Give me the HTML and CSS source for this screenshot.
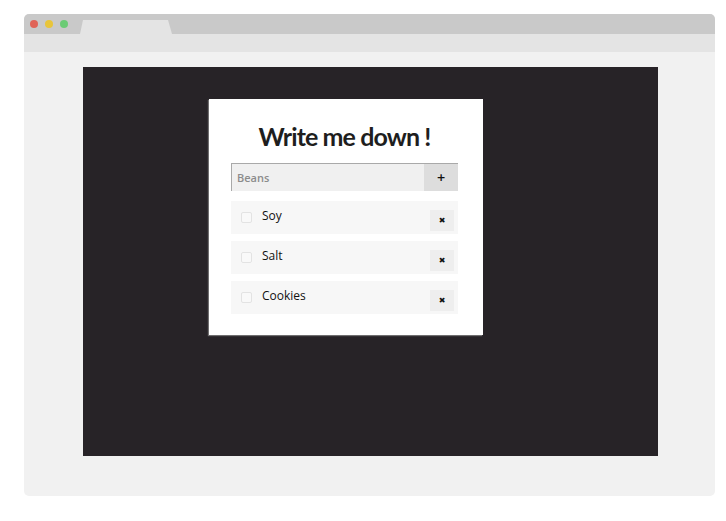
FILE: index.html
```html
<!DOCTYPE html>
<html>
<head>
<meta charset="utf-8">
<link rel="stylesheet" href="styles.css">
</head>
<body>
<div class="browser">
  <div class="titlebar">
    <div class="dots"><span class="dot red"></span><span class="dot yellow"></span><span class="dot green"></span></div>
    <div class="tab"></div>
  </div>
  <div class="toolbar"></div>
  <div class="content">
    <div class="stage">
      <div class="card">
        <h1 class="title">Write me down !</h1>
        <form class="add">
          <div class="field">Beans</div>
          <button type="button" class="add-btn">+</button>
        </form>
        <ul class="list">
          <li class="item"><span class="check"></span><span class="label">Soy</span><span class="del">✖</span></li>
          <li class="item"><span class="check"></span><span class="label">Salt</span><span class="del">✖</span></li>
          <li class="item"><span class="check"></span><span class="label">Cookies</span><span class="del">✖</span></li>
        </ul>
      </div>
    </div>
  </div>
</div>
</body>
</html>
```
FILE: styles.css
```css
html, body { margin: 0; padding: 0; background: #ffffff; }
body { padding: 14px 11px 0 24px; font-family: "Open Sans", sans-serif; }
.browser {
  width: 691px;
  height: 482px;
  border-radius: 5px;
  overflow: hidden;
  display: flex;
  flex-direction: column;
  background: #f1f1f1;
}
.titlebar {
  height: 20px;
  background: #c9c9c9;
  display: flex;
  align-items: flex-end;
  position: relative;
}
.dots { position: absolute; left: 6px; top: 6px; display: flex; gap: 7px; }
.dot { width: 8px; height: 8px; border-radius: 50%; display: block; }
.red { background: #e06458; }
.yellow { background: #e8c53a; }
.green { background: #6bcb75; }
.tab {
  margin-left: 56px;
  width: 92px;
  height: 14px;
  background: #e4e4e4;
  clip-path: polygon(3px 0, 88px 0, 92px 100%, 0 100%);
}
.toolbar { height: 18px; background: #e4e4e4; }
.content { flex: 1; padding: 15px 57px 0 59px; }
.stage {
  height: 389px;
  background: #272327;
  display: flex;
  justify-content: flex-start;
  align-items: flex-start;
  padding: 32px 0 0 126px;
  box-sizing: border-box;
}
.card {
  width: 274px;
  height: 236px;
  box-sizing: border-box;
  background: #ffffff;
  padding: 20px 25px 0 22px;
  box-shadow: -1px 1px 1px rgba(160,160,160,0.6);
}
.title {
  margin: 0;
  font-family: Lato, sans-serif;
  font-weight: 700;
  font-size: 25px;
  letter-spacing: -0.9px;
  color: #1e1e1e;
  text-align: center;
  line-height: 34px;
  height: 44px;
}
.add { display: flex; height: 28px; margin: 0 0 10px 0; }
.field {
  flex: 1;
  background: #f0f0f0;
  border-top: 1px solid #a9a9a9;
  border-left: 1px solid #a9a9a9;
  color: #8c8c8c;
  font-family: "Open Sans", sans-serif;
  font-weight: 600;
  font-size: 11px;
  line-height: 27px;
  padding-left: 5px;
}
.add-btn {
  width: 34px;
  border: none;
  border-top: 1px solid #a9a9a9;
  background: #dddddd;
  font-family: "DejaVu Sans", sans-serif;
  font-weight: 700;
  font-size: 11px;
  color: #111;
  padding: 0;
}
.list { list-style: none; margin: 0; padding: 0; display: flex; flex-direction: column; gap: 7px; }
.item {
  height: 33px;
  background: #f7f7f7;
  display: flex;
  align-items: center;
  padding: 0 4px 0 10px;
}
.check {
  width: 9px;
  height: 9px;
  border: 1px solid #e3e3e3;
  border-radius: 2px;
  background: #f9f9f9;
}
.label {
  flex: 1;
  margin-left: 10px;
  font-size: 12px;
  color: #111;
  position: relative;
  top: -2px;
}
.del {
  width: 24px;
  height: 21px;
  background: #eeeeee;
  display: flex;
  align-items: center;
  justify-content: center;
  font-size: 8px;
  color: #111;
  margin-top: 5px;
  font-family: "DejaVu Sans", sans-serif;
}
```
